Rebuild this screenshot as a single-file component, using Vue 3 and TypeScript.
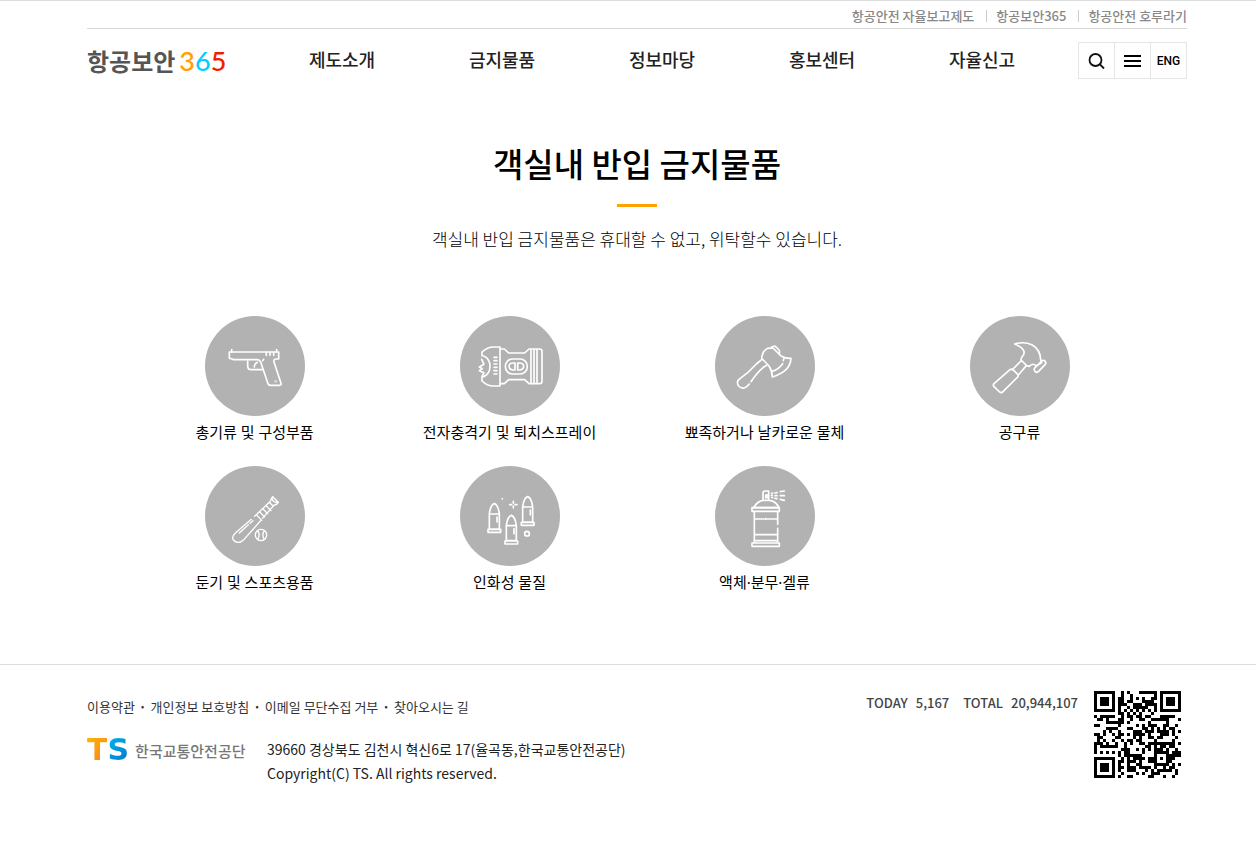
<script setup lang="ts">
interface Item {
  id: string
  label: string
}

const utilityLinks: string[] = ['항공안전 자율보고제도', '항공보안365', '항공안전 호루라기']
const menu: string[] = ['제도소개', '금지물품', '정보마당', '홍보센터', '자율신고']
const policyLinks: string[] = ['이용약관', '개인정보 보호방침', '이메일 무단수집 거부', '찾아오시는 길']
const items: Item[] = [
  { id: 'gun', label: '총기류 및 구성부품' },
  { id: 'stun', label: '전자충격기 및 퇴치스프레이' },
  { id: 'axe', label: '뾰족하거나 날카로운 물체' },
  { id: 'hammer', label: '공구류' },
  { id: 'bat', label: '둔기 및 스포츠용품' },
  { id: 'bullet', label: '인화성 물질' },
  { id: 'spray', label: '액체·분무·겔류' },
]

// QR code, version 3 (29 x 29 modules), byte mode
interface Level {
  bits: number
  blocks: number
  data: number
  ecc: number
}
const LEVEL_M: Level = { bits: 0, blocks: 1, data: 44, ecc: 26 }
const SIZE = 29

function gfMul(a: number, b: number): number {
  let r = 0
  for (let i = 7; i >= 0; i--) {
    r = (r << 1) ^ ((r >>> 7) * 0x11d)
    r ^= ((b >>> i) & 1) * a
  }
  return r
}

function eccOf(data: number[], degree: number): number[] {
  const gen: number[] = new Array(degree).fill(0)
  gen[degree - 1] = 1
  let root = 1
  for (let i = 0; i < degree; i++) {
    for (let j = 0; j < degree; j++) {
      gen[j] = gfMul(gen[j], root)
      if (j + 1 < degree) gen[j] ^= gen[j + 1]
    }
    root = gfMul(root, 2)
  }
  const rem: number[] = new Array(degree).fill(0)
  for (const byte of data) {
    const factor = byte ^ (rem.shift() as number)
    rem.push(0)
    gen.forEach((g, i) => (rem[i] ^= gfMul(g, factor)))
  }
  return rem
}

function codewords(text: string, level: Level): number[] {
  const bits: number[] = []
  const push = (value: number, n: number) => {
    for (let i = n - 1; i >= 0; i--) bits.push((value >>> i) & 1)
  }
  push(4, 4)
  push(text.length, 8)
  for (const c of text) push(c.charCodeAt(0), 8)
  push(0, 4)
  const bytes: number[] = []
  for (let i = 0; i < bits.length; i += 8) bytes.push(parseInt(bits.slice(i, i + 8).join(''), 2))
  for (let pad = 0xec; bytes.length < level.blocks * level.data; pad ^= 0xec ^ 0x11) bytes.push(pad)
  const blocks: number[][] = []
  for (let b = 0; b < level.blocks; b++) blocks.push(bytes.slice(b * level.data, (b + 1) * level.data))
  const eccs = blocks.map((b) => eccOf(b, level.ecc))
  const out: number[] = []
  for (let i = 0; i < level.data; i++) blocks.forEach((b) => out.push(b[i]))
  for (let i = 0; i < level.ecc; i++) eccs.forEach((b) => out.push(b[i]))
  return out
}

const masks: ((x: number, y: number) => boolean)[] = [
  (x, y) => (x + y) % 2 === 0,
  (_x, y) => y % 2 === 0,
  (x) => x % 3 === 0,
  (x, y) => (x + y) % 3 === 0,
  (x, y) => (Math.floor(x / 3) + Math.floor(y / 2)) % 2 === 0,
  (x, y) => ((x * y) % 2) + ((x * y) % 3) === 0,
  (x, y) => (((x * y) % 2) + ((x * y) % 3)) % 2 === 0,
  (x, y) => (((x + y) % 2) + ((x * y) % 3)) % 2 === 0,
]

function qrPath(text: string, level: Level, mask: number): string {
  const m: boolean[][] = Array.from({ length: SIZE }, () => new Array(SIZE).fill(false))
  const fixed: boolean[][] = Array.from({ length: SIZE }, () => new Array(SIZE).fill(false))
  const set = (x: number, y: number, dark: boolean) => {
    if (x < 0 || y < 0 || x >= SIZE || y >= SIZE) return
    m[y][x] = dark
    fixed[y][x] = true
  }
  for (let i = 0; i < SIZE; i++) {
    set(6, i, i % 2 === 0)
    set(i, 6, i % 2 === 0)
  }
  for (const [cx, cy] of [[3, 3], [SIZE - 4, 3], [3, SIZE - 4]]) {
    for (let dy = -4; dy <= 4; dy++)
      for (let dx = -4; dx <= 4; dx++) {
        const d = Math.max(Math.abs(dx), Math.abs(dy))
        set(cx + dx, cy + dy, d !== 2 && d !== 4)
      }
  }
  for (let dy = -2; dy <= 2; dy++)
    for (let dx = -2; dx <= 2; dx++) set(22 + dx, 22 + dy, Math.max(Math.abs(dx), Math.abs(dy)) !== 1)

  const head = (level.bits << 3) | mask
  let rem = head
  for (let i = 0; i < 10; i++) rem = (rem << 1) ^ ((rem >>> 9) * 0x537)
  const format = ((head << 10) | rem) ^ 0x5412
  const bit = (i: number) => ((format >>> i) & 1) === 1
  for (let i = 0; i <= 5; i++) set(8, i, bit(i))
  set(8, 7, bit(6))
  set(8, 8, bit(7))
  set(7, 8, bit(8))
  for (let i = 9; i < 15; i++) set(14 - i, 8, bit(i))
  for (let i = 0; i < 8; i++) set(SIZE - 1 - i, 8, bit(i))
  for (let i = 8; i < 15; i++) set(8, SIZE - 15 + i, bit(i))
  set(8, SIZE - 8, true)

  const data = codewords(text, level)
  let k = 0
  for (let right = SIZE - 1; right >= 1; right -= 2) {
    if (right === 6) right = 5
    for (let v = 0; v < SIZE; v++) {
      for (let j = 0; j < 2; j++) {
        const x = right - j
        const y = ((right + 1) & 2) === 0 ? SIZE - 1 - v : v
        if (fixed[y][x]) continue
        const dark = k < data.length * 8 && ((data[k >>> 3] >>> (7 - (k & 7))) & 1) === 1
        m[y][x] = dark !== masks[mask](x, y)
        k++
      }
    }
  }
  let d = ''
  m.forEach((row, y) => row.forEach((on, x) => { if (on) d += `M${x} ${y}h1v1h-1z` }))
  return d
}

const qr = qrPath('http://m.site.naver.com/0hBPO', LEVEL_M, 2)
</script>

<template>
  <div class="page">
    <header class="header">
      <div class="inner">
        <nav class="utility" aria-label="관련 사이트">
          <a v-for="link in utilityLinks" :key="link" href="#">{{ link }}</a>
        </nav>
        <div class="bar">
          <a class="logo" href="#"><span>항공보안</span><span class="num"><i class="n3">3</i><i class="n6">6</i><i class="n5">5</i></span></a>
          <nav class="menu" aria-label="주 메뉴">
            <a v-for="m in menu" :key="m" href="#">{{ m }}</a>
          </nav>
          <div class="tools">
            <button type="button" aria-label="검색">
              <svg width="18" height="18" viewBox="0 0 18 18" fill="none" stroke="#111" stroke-width="1.8">
                <circle cx="7.5" cy="8" r="6" /><path d="M11.7 12.2 16 16.5" />
              </svg>
            </button>
            <button type="button" aria-label="전체 메뉴">
              <svg width="18" height="12" viewBox="0 0 18 12" fill="#000">
                <path d="M0 0h17v2H0zM0 5h17v2H0zM0 10h17v2H0z" />
              </svg>
            </button>
            <button type="button">ENG</button>
          </div>
        </div>
      </div>
    </header>

    <main class="inner main">
      <h1>객실내 반입 금지물품</h1>
      <p class="lead">객실내 반입 금지물품은 휴대할 수 없고, 위탁할수 있습니다.</p>
      <ul class="items">
        <li v-for="item in items" :key="item.id">
          <a href="#">
            <svg class="icon" viewBox="15 18 300 300" aria-hidden="true">
              <g v-if="item.id === 'gun'">
                <path d="M88 126h148v21h-7q-9 0-7 9l21 64q2 6-5 6h-27q-5 0-7-5l-22-65q-3-7-10-7H100q-3-4-12-4z" />
                <path d="M95 126v-7M230 126v-7M199 128v8M210 128v8M221 128v8M188 152l3-4M143 153v15q0 11 11 11h32M163 171q-1-9 9-14" />
                <circle cx="227" cy="214" r="1" />
              </g>
              <g v-else-if="item.id === 'stun'">
                <path d="M81 138v-12q16-15 34-15h20v117h-20q-18 0-34-15v-12M86 138q19 8 19 31t-19 31M80 148l7 15-14 8 9 5-9 6 14 6-6 12" />
                <path d="M135 117h13l13 12h48l13-12h32q7 0 7 7v90q0 7-7 7h-32l-13-12h-48l-13 12h-13M228 117v104M237 117v104M246 117v104" />
                <path d="M117 142h9M117 152h9M117 162h9M117 172h9M117 182h9M117 192h9" />
                <rect x="151" y="147" width="66" height="45" rx="22" />
                <path d="M180 159h-7q-11 1-11 10t11 11h7zM188 159h7q11 1 11 10t-11 11h-7z" />
              </g>
              <g v-else-if="item.id === 'axe'">
                <path d="M172 115l17-1 23 23q16 9 31 8-2 40-56 56-1-20-10-33l-20-21q-3-4-1-9l4-11q2-5 12-12z" />
                <path d="M184 112l7-3q3-2 6 1l10 10q3 4 1 10M156 148l-17 14q-24 27-52 46-9 8-1 20 11 12 24 2l8-8M123 215q18-27 37-43l10-6M186 184q20-6 32-23M220 152l2-8" />
              </g>
              <g v-else-if="item.id === 'hammer'">
                <path d="M149 102q29-9 53 3 24 14 25 44l3 9-17 10q-9-11-20 1l-8-2-17-17 2-8q22-22-21-40z" />
                <path d="M209 174l21-21q5-4 10 0l2 4q2 4-2 7l-20 21q-5 4-9 0l-2-3q-3-4 0-8zM168 153l-27 27M184 167l-24 28M135 179q5-4 9 0l14 14q3 4 0 8l-44 44q-5 5-10 1l-17-16q-4-5 0-9z" />
              </g>
              <g v-else-if="item.id === 'bat'" class="fine">
                <path d="M154 178l-47 40q-12 11-8 20 8 12 22 8 7-2 14-11l47-53M164 169l47-45q2-9 7-14l17 17q-3 7-12 8l-36 40M118 219l27-25M150 190l9-8M171 166l14 15M180 157l14 14M190 148l13 13M200 139l13 13M208 127l12 12M218 110q-4 8 2 13t15 4" />
                <circle cx="183" cy="225" r="17" />
                <path d="M173 212q9 13 0 26M193 212q-9 13 0 26" />
              </g>
              <g v-else-if="item.id === 'bullet'">
                <g v-for="[x, y] in [[118, 131], [169, 166], [218, 110]]" :key="x">
                  <path :transform="`translate(${x} ${y})`" d="M-15 76V30Q-11 3 0 0 11 3 15 30v46M-15 31h30M-15 76h30M-19 77h38v9h-38zM8 40v15" />
                </g>
                <path d="M175 124v6M175 138v6M164 134h6M180 134h6M142 116v1" />
                <circle cx="216" cy="221" r="7" />
              </g>
              <g v-else>
                <path d="M131 143q10-19 28-22h20q20 3 28 22zM159 121V99q0-6 6-6h11v28M167 105h6v8h-6z" />
                <path d="M126 143h82v11h-82zM133 155v93M203 155v38M203 205v43M126 249h82v10h-82zM133 177h28M170 177h33M133 224h70M133 242h70M166 176v2" />
                <path d="M184 106h3M185 100l3-1M185 112l3 1M195 99l6-1M195 107h6M195 115l6 1M211 95l12-2M211 107h12M211 118l12 3" />
              </g>
            </svg>
            <span>{{ item.label }}</span>
          </a>
        </li>
      </ul>
    </main>

    <footer class="footer">
      <div class="inner foot">
        <div class="info">
          <nav class="policy" aria-label="정책">
            <a v-for="p in policyLinks" :key="p" href="#">{{ p }}</a>
          </nav>
          <div class="company">
            <a class="ts" href="#"><b class="t">T</b><b class="s">S</b><span>한국교통안전공단</span></a>
            <address>
              39660 경상북도 김천시 혁신6로 17(율곡동,한국교통안전공단)<br />
              Copyright(C) TS. All rights reserved.
            </address>
          </div>
        </div>
        <dl class="stats">
          <div><dt>TODAY</dt><dd>5,167</dd></div>
          <div><dt>TOTAL</dt><dd>20,944,107</dd></div>
        </dl>
        <svg class="qr" viewBox="0 0 29 29" shape-rendering="crispEdges" role="img" aria-label="QR 코드">
          <path :d="qr" />
        </svg>
      </div>
    </footer>
  </div>
</template>

<style>
body {
  margin: 0;
  background: #fff;
}
</style>

<style scoped>
.page {
  font-family: 'Noto Sans CJK KR', 'Noto Sans', sans-serif;
  color: #000;
  border-top: 1px solid #ddd;
}
.page * {
  box-sizing: border-box;
}
a {
  color: inherit;
  text-decoration: none;
}
.header,
.main,
.footer {
  padding-left: 18px;
}
.inner {
  max-width: 1100px;
  margin: 0 auto;
}
.main.inner {
  max-width: 1118px;
}
.utility {
  display: flex;
  justify-content: flex-end;
  align-items: center;
  height: 28px;
  padding-top: 2px;
  border-bottom: 1px solid #d8d8d8;
  font-size: 13px;
  line-height: 20px;
  font-weight: 500;
  color: #888;
}
.utility a + a {
  display: flex;
  align-items: center;
}
.utility a + a::before {
  content: '';
  width: 1px;
  height: 12px;
  margin: 0 9px 0 12px;
  background: #ccc;
}
.bar {
  display: flex;
  align-items: center;
  height: 63px;
}
.logo {
  display: flex;
  align-items: center;
  width: 175px;
  gap: 4px;
  font-size: 24px;
  font-weight: 700;
  line-height: 36px;
  color: #555;
}
.num {
  font-family: Lato, sans-serif;
  font-size: 27px;
  font-weight: 500;
}
.num i {
  font-style: normal;
}
.n3 {
  color: #ffa200;
}
.n6 {
  color: #00d0ff;
}
.n5 {
  color: #f21d00;
}
.menu {
  display: grid;
  grid-template-columns: repeat(5, 1fr);
  width: 800px;
  padding-bottom: 3px;
}
.menu a {
  text-align: center;
  font-size: 18px;
  line-height: 28px;
  font-weight: 500;
  color: #222;
}
.tools {
  display: flex;
  width: 109px;
  margin-left: auto;
  border: 1px solid #e5e5e5;
}
.tools button {
  display: flex;
  flex: 1;
  align-items: center;
  justify-content: center;
  height: 35px;
  padding: 0;
  border: 0;
  background: #fff;
  font: 500 12px/16px Roboto, sans-serif;
  color: #000;
}
.tools button + button {
  border-left: 1px solid #e5e5e5;
}
h1 {
  margin: 0;
  padding-top: 47px;
  font-size: 33px;
  line-height: 48px;
  font-weight: 500;
  text-align: center;
}
h1::after {
  content: '';
  display: block;
  width: 40px;
  height: 3px;
  margin: 17px auto 0;
  background: #ffa200;
}
.lead {
  margin: 20px 0 0;
  font-size: 17px;
  line-height: 24px;
  font-weight: 300;
  text-align: center;
}
.items {
  display: grid;
  grid-template-columns: repeat(4, 1fr);
  margin: 65px 40px 0;
  padding: 0 0 48px;
  list-style: none;
}
.items li {
  height: 150px;
  text-align: center;
}
.items a {
  display: flex;
  flex-direction: column;
  align-items: center;
  font-family: 'Noto Sans', 'Noto Sans CJK KR', sans-serif;
  font-size: 15px;
  line-height: 22px;
  font-weight: 400;
}
.icon {
  width: 100px;
  height: 100px;
  margin-bottom: 5px;
  border-radius: 50%;
  background: #b2b2b2;
  fill: none;
  stroke: #fff;
  stroke-width: 5;
  stroke-linecap: round;
  stroke-linejoin: round;
}
.fine {
  stroke-width: 4;
}
.footer {
  border-top: 1px solid #ddd;
}
.foot {
  display: flex;
  padding-top: 26px;
}
.policy {
  display: flex;
  margin-top: 6px;
  font-size: 13px;
  line-height: 20px;
  color: #333;
}
.policy a + a::before {
  content: '·';
  margin: 0 4px;
  font-weight: 700;
}
.company {
  display: flex;
  margin-top: 20px;
}
.ts {
  display: flex;
  align-items: center;
  width: 180px;
  height: 26px;
  color: #777;
  font-size: 15px;
  font-weight: 500;
}
.ts b {
  font: 700 30px/26px 'DejaVu Sans', sans-serif;
  background-clip: text;
  color: transparent;
}
.ts .t {
  background-image: linear-gradient(135deg, #ffb400, #f5822a);
}
.ts .s {
  background-image: linear-gradient(135deg, #00b4f0, #0078c8);
}
.ts span {
  margin-left: 6px;
}
address {
  font-style: normal;
  font-size: 14px;
  line-height: 24px;
  color: #222;
}
.stats {
  display: flex;
  gap: 14px;
  margin: 2px 16px 0 auto;
  font-size: 13px;
  line-height: 20px;
  font-weight: 500;
  color: #444;
}
.stats div {
  display: flex;
  gap: 8px;
  height: 20px;
}
.stats dd {
  margin: 0;
}
.qr {
  width: 87px;
  height: 87px;
  margin-right: 6px;
}
</style>
